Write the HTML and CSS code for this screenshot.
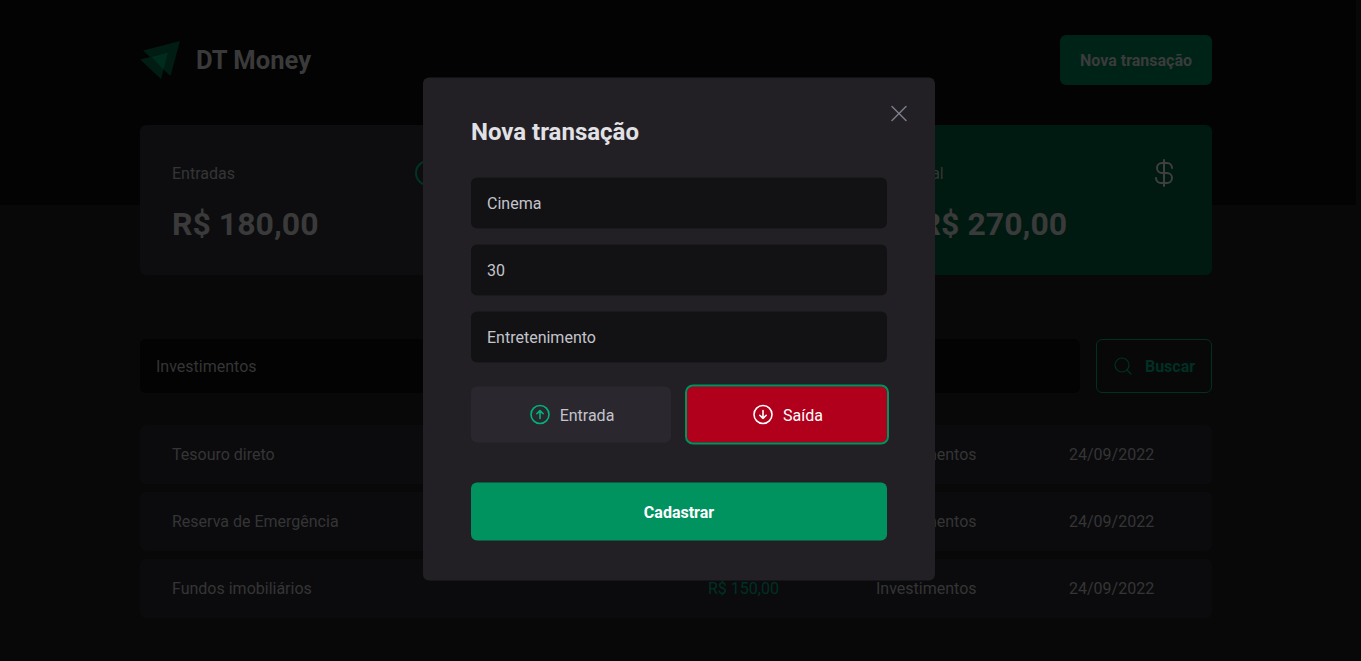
FILE: index.html
```html
<!DOCTYPE html>
<html lang="pt-BR">
<head>
<meta charset="utf-8">
<title>DT Money</title>
<link rel="stylesheet" href="styles.css">
</head>
<body>
<div class="page">
  <header class="header">
    <div class="container header-content">
      <div class="brand">
        <svg class="logo" width="41" height="40" viewBox="0 0 41 40"><path class="logo-back" d="M3 10.500 40 1 30.500 36Z"/><path class="logo-back" d="M0 19.500 28 12.500 21 39Z"/><path class="logo-core" d="M11.500 17 28 12.500 23.500 29.500Z"/></svg>
        <span>DT Money</span>
      </div>
      <button class="new-button">Nova transação</button>
    </div>
  </header>
  <section class="container summary">
    <div class="card">
      <div class="card-top"><span>Entradas</span><svg class="icon green thick" width="32" height="32" viewBox="0 0 32 32"><circle cx="16" cy="16" r="12"/><path d="M11.800 15 16 10.800l4.200 4.200M16 21.200V10.800"/></svg></div>
      <strong>R$ 180,00</strong>
    </div>
    <div class="card">
      <div class="card-top"><span>Saídas</span></div>
    </div>
    <div class="card total">
      <div class="card-top"><span>Total</span><svg class="icon dollar" width="32" height="32" viewBox="0 0 32 32"><path d="M16 3v26M24 11a5 5 0 0 0-5-5h-5a5 5 0 0 0 0 10h5a5 5 0 0 1 0 10h-6a5 5 0 0 1-5-5"/></svg></div>
      <strong>-R$ 270,00</strong>
    </div>
  </section>
  <main class="container">
    <div class="search">
      <div class="search-input">Investimentos</div>
      <button class="search-button"><svg class="icon" width="20" height="20" viewBox="0 0 20 20"><circle cx="9" cy="9" r="7"/><path d="m14 14 4 4"/></svg><span class="label">Buscar</span></button>
    </div>
    <div class="table">
      <div class="row"><span>Tesouro direto</span><span class="income"></span><span>Investimentos</span><span>24/09/2022</span></div>
      <div class="row"><span>Reserva de Emergência</span><span class="income"></span><span>Investimentos</span><span>24/09/2022</span></div>
      <div class="row"><span>Fundos imobiliários</span><span class="income">R$ 150,00</span><span>Investimentos</span><span>24/09/2022</span></div>
    </div>
  </main>
</div>
<div class="overlay">
  <div class="modal">
    <button class="close"><svg class="icon" width="24" height="24" viewBox="0 0 24 24"><path d="m5 5 14 14m0-14-14 14"/></svg></button>
    <h2>Nova transação</h2>
    <div class="fields">
      <div class="field">Cinema</div>
      <div class="field">30</div>
      <div class="field">Entretenimento</div>
    </div>
    <div class="types">
      <button class="type"><svg class="icon green" width="24" height="24" viewBox="0 0 24 24"><circle cx="12" cy="12" r="9"/><path d="M8.800 11.200 12 8.100l3.200 3.100M12 15.900V8.100"/></svg><span class="label">Entrada</span></button>
      <button class="type selected"><svg class="icon" width="24" height="24" viewBox="0 0 24 24"><circle cx="12" cy="12" r="9"/><path d="M8.800 12.800 12 15.900l3.200-3.100M12 8.100v7.800"/></svg><span class="label">Saída</span></button>
    </div>
    <button class="submit">Cadastrar</button>
  </div>
</div>
</body>
</html>
```
FILE: styles.css
```css
* { box-sizing: border-box; margin: 0; padding: 0; }
body { background: #080808; color: #353536; font: 16px/26px Roboto, sans-serif; height: 661px; overflow: hidden; }
button { font: inherit; border: 0; display: flex; align-items: center; justify-content: center; }
.icon { fill: none; stroke: currentColor; stroke-width: 1.6; stroke-linecap: round; stroke-linejoin: round; flex: none; }
.icon.thick, .icon.dollar { stroke-width: 2; }
.label { padding-top: 2px; }
.page { width: 1356px; }
.container { width: 1072px; margin-left: 140px; }
.header { background: #030303; height: 205px; padding-top: 35px; }
.header-content { display: flex; justify-content: space-between; align-items: center; height: 50px; }
.brand { display: flex; align-items: center; gap: 15px; font-size: 25.6px; font-weight: 700; color: #3a3a3b; }
.logo { flex: none; }
.logo-back { fill: #001c13; }
.logo-core { fill: #002c1e; }
.new-button { width: 152px; height: 50px; padding-top: 2px; border-radius: 6px; background: #002318; color: #3b3b3b; font-weight: 700; }
.summary { display: grid; grid-template-columns: repeat(3, 1fr); gap: 32px; margin-top: -80px; }
.card { height: 150px; padding: 32px; border-radius: 6px; background: #0d0d0f; }
.total { background: #001a11; }
.card-top { display: flex; justify-content: space-between; align-items: center; height: 32px; }
.card-top span { padding-top: 2px; }
.card strong { display: block; margin-top: 13px; font-size: 32px; line-height: 45px; color: #3a3a3b; }
.green { color: #003425; }
.dollar { color: #3f3f3f; }
.search { display: flex; gap: 16px; margin-top: 64px; height: 54px; }
.search-input { flex: 1; border-radius: 6px; background: #030303; padding: 1px 16px 0; line-height: 54px; }
.search-button { width: 116px; border: 1px solid #003023; border-radius: 6px; background: transparent; color: #003023; font-weight: 700; gap: 12px; }
.search-button .icon { stroke-width: 1.2; }
.table { display: grid; gap: 8px; margin-top: 32px; }
.row { display: grid; grid-template-columns: 536px 168px 193px 1fr; align-items: center; height: 59px; padding: 0 32px; border-radius: 6px; background: #0b0b0d; }
.income { color: #003023; }
.overlay { position: absolute; inset: 0; display: flex; justify-content: center; align-items: center; padding-right: 3px; }
.modal { position: relative; width: 512px; height: 503px; padding: 40px 48px; border-radius: 6px; background: #222024; color: #c4c4cc; margin-top: -3px; transform: translateY(-0.5px); }
.close { position: absolute; top: 24px; right: 24px; background: transparent; color: #7c7c8a; }
.close .icon { stroke-width: 1.5; }
.modal h2 { font-size: 24px; line-height: 28px; color: #e1e1e6; }
.fields { display: grid; gap: 16px; margin-top: 32px; }
.field { height: 51px; line-height: 51px; padding: 0 16px; border-radius: 6px; background: #121214; }
.types { display: grid; grid-template-columns: 1fr 1fr; gap: 16px; margin-top: 24px; }
.type { height: 56px; border-radius: 6px; background: #2a272e; color: #c4c4cc; gap: 8px; }
.type .green { color: #00b37e; }
.type.selected { background: #b0001c; color: #fff; outline: 2px solid #00935f; }
.submit { width: 100%; height: 58px; padding-top: 2px; margin-top: 40px; border-radius: 6px; background: #00935f; color: #fff; font-weight: 700; }
```
